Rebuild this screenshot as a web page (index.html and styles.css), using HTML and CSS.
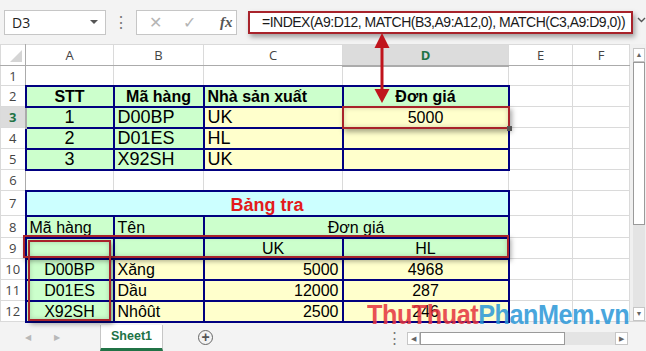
FILE: index.html
```html
<!DOCTYPE html>
<html lang="vi">
<head>
    <meta charset="UTF-8">
    <meta name="viewport" content="width=device-width, initial-scale=1.0">
    <title>Bảng tra - INDEX MATCH</title>
    <link rel="stylesheet" href="styles.css">
</head>
<body>
<div class="window">
    <div class="formula-bar">
        <div class="name-box"><span>D3</span><span class="caret"></span></div>
        <div class="vdots">⋮</div>
        <div class="fn-box">
            <span class="cancel">✕</span>
            <span class="enter">✓</span>
            <span class="fx">fx</span>
        </div>
        <div class="formula">=INDEX(A9:D12, MATCH(B3,A9:A12,0), MATCH(C3,A9:D9,0))</div>
        <svg class="expand" width="9" height="6" viewBox="0 0 9 6">
            <polyline points="1,1 4.5,4.5 8,1" fill="none" stroke="#555" stroke-width="1.4"/>
        </svg>
    </div>

    <div class="sheet">
        <table class="grid">
            <colgroup>
                <col style="width:25px"><col style="width:88px"><col style="width:90px"><col style="width:139px">
                <col style="width:166px"><col style="width:64px"><col style="width:57px">
            </colgroup>
            <tr class="hdr">
                <th class="corner"><span class="tri"></span></th>
                <th>A</th><th>B</th><th>C</th><th class="sel-col">D</th><th>E</th><th>F</th>
            </tr>
            <tr class="h20">
                <th>1</th><td></td><td></td><td></td><td></td><td></td><td></td>
            </tr>
            <tr class="h21">
                <th>2</th>
                <td class="n g c head">STT</td>
                <td class="n g c head">Mã hàng</td>
                <td class="n g l head">Nhà sản xuất</td>
                <td class="n g c head">Đơn giá</td>
                <td></td><td></td>
            </tr>
            <tr class="h21">
                <th class="sel-row">3</th>
                <td class="n g c big">1</td>
                <td class="n g l big">D00BP</td>
                <td class="n y l big">UK</td>
                <td class="n y c">5000</td>
                <td></td><td></td>
            </tr>
            <tr class="h21">
                <th>4</th>
                <td class="n g c big">2</td>
                <td class="n g l big">D01ES</td>
                <td class="n y l big">HL</td>
                <td class="n y"></td>
                <td></td><td></td>
            </tr>
            <tr class="h21">
                <th>5</th>
                <td class="n g c big">3</td>
                <td class="n g l big">X92SH</td>
                <td class="n y l big">UK</td>
                <td class="n y"></td>
                <td></td><td></td>
            </tr>
            <tr class="h21">
                <th>6</th><td></td><td></td><td></td><td></td><td></td><td></td>
            </tr>
            <tr class="h25">
                <th>7</th>
                <td class="n cy c title" colspan="4">Bảng tra</td>
                <td></td><td></td>
            </tr>
            <tr class="h22">
                <th>8</th>
                <td class="n g l">Mã hàng</td>
                <td class="n g l">Tên</td>
                <td class="n g c" colspan="2">Đơn giá</td>
                <td></td><td></td>
            </tr>
            <tr class="h21">
                <th>9</th>
                <td class="n g"></td>
                <td class="n g"></td>
                <td class="n g c">UK</td>
                <td class="n g c">HL</td>
                <td></td><td></td>
            </tr>
            <tr class="h21">
                <th>10</th>
                <td class="n g c">D00BP</td>
                <td class="n y l">Xăng</td>
                <td class="n y r">5000</td>
                <td class="n y c">4968</td>
                <td></td><td></td>
            </tr>
            <tr class="h21">
                <th>11</th>
                <td class="n g c">D01ES</td>
                <td class="n y l">Dầu</td>
                <td class="n y r">12000</td>
                <td class="n y c">287</td>
                <td></td><td></td>
            </tr>
            <tr class="h21">
                <th>12</th>
                <td class="n g c">X92SH</td>
                <td class="n y l">Nhôût</td>
                <td class="n y r">2500</td>
                <td class="n y c">246</td>
                <td></td><td></td>
            </tr>
        </table>
        <div class="vscroll">
            <div class="sb-btn">▲</div>
            <div class="sb-thumb"></div>
            <div class="sb-track"></div>
            <div class="sb-btn">▼</div>
        </div>
    </div>

    <div class="tabs">
        <span class="nav first">◀</span>
        <span class="nav">▶</span>
        <div class="tab">Sheet1</div>
        <span class="add">+</span>
        <span class="tab-dots">⋮</span>
        <div class="hscroll">
            <div class="hs-btn">◀</div>
            <div class="hs-thumb"></div>
            <div class="hs-track"></div>
            <div class="hs-btn">▶</div>
        </div>
    </div>

    <!-- callouts drawn over the sheet -->
    <div class="mark mark-d3"><span class="handle"></span></div>
    <div class="mark mark-row9"></div>
    <div class="mark mark-col-a"></div>
    <svg class="arrow" width="16" height="72" viewBox="0 0 16 72">
        <line x1="8" y1="14" x2="8" y2="59" stroke="#c0141c" stroke-width="3"/>
        <polygon points="0.5,16 8,1 15.5,16" fill="#c0141c"/>
        <polygon points="0.5,57 8,71 15.5,57" fill="#c0141c"/>
    </svg>
    <div class="watermark"><span class="wm-red">ThuThuat</span><span class="wm-blue">PhanMem.vn</span></div>
</div>
</body>
</html>
```

FILE: styles.css
```css
body {
    margin: 0;
    font-family: "Liberation Sans", Arial, sans-serif;
    background: #fff;
}
.window {
    position: relative;
    width: 646px;
    height: 351px;
    overflow: hidden;
    background: #fff;
}

/* formula bar */
.formula-bar {
    height: 44px;
    display: flex;
    align-items: center;
    padding-left: 4px;
    background: #f3f3f3;
    box-sizing: border-box;
}
.name-box {
    width: 102px;
    height: 25px;
    display: flex;
    align-items: center;
    justify-content: space-between;
    padding: 0 7px 0 7px;
    box-sizing: border-box;
    background: #fff;
    border: 1px solid #c6c6c6;
    font-family: "Open Sans", sans-serif;
    font-size: 14px;
    color: #222;
}
.caret {
    width: 0;
    height: 0;
    border-left: 4px solid transparent;
    border-right: 4px solid transparent;
    border-top: 4px solid #555;
}
.vdots {
    width: 30px;
    text-align: center;
    color: #777;
    font-size: 16px;
}
.fn-box {
    width: 101px;
    height: 25px;
    display: flex;
    align-items: center;
    box-sizing: border-box;
    background: #fff;
    border: 1px solid #c6c6c6;
    color: #b5b5b5;
}
.cancel {
    margin-left: 12px;
    font-size: 16px;
}
.enter {
    margin-left: 21px;
    font-size: 16px;
}
.fx {
    margin-left: 24px;
    font-family: "Liberation Serif", serif;
    font-style: italic;
    font-weight: bold;
    font-size: 15px;
    color: #555;
}
.formula {
    margin-left: 11px;
    width: 385px;
    height: 23px;
    box-sizing: border-box;
    padding-left: 12px;
    background: #fff;
    border: 2px solid #a8232b;
    box-shadow: 2px 3px 5px rgba(0, 0, 0, 0.35);
    font-size: 14px;
    letter-spacing: -0.5px;
    line-height: 19px;
    color: #1a1a1a;
    white-space: nowrap;
    overflow: hidden;
}
.expand {
    margin-left: 4px;
    margin-top: -4px;
}

/* sheet */
.sheet {
    display: flex;
    height: 277px;
}
.grid {
    width: 629px;
    table-layout: fixed;
    border-collapse: collapse;
}
.grid th {
    font-family: "Open Sans", sans-serif;
    font-weight: normal;
    font-size: 13px;
    color: #444;
    background: #fff;
    border: 1px solid #dadada;
    padding: 0;
}
.grid tr.hdr {
    height: 21px;
}
.grid tr.hdr th {
    border-bottom-color: #ababab;
}
.grid tr th:first-child {
    border-right-color: #ababab;
}
.corner {
    position: relative;
}
.tri {
    position: absolute;
    right: 3px;
    bottom: 3px;
    width: 0;
    height: 0;
    border-left: 12px solid transparent;
    border-bottom: 12px solid #d5d5d5;
}
.grid th.sel-col {
    background: #dcdcdc;
    color: #217346;
    font-weight: bold;
    border-bottom: 2px solid #217346;
}
.grid th.sel-row {
    background: #dcdcdc;
    color: #217346;
    font-weight: bold;
    border-right: 2px solid #217346;
}
.grid td {
    border: 1px solid #dadada;
    padding: 0 3px 1px;
    font-size: 16px;
    line-height: 1;
    vertical-align: bottom;
    white-space: nowrap;
    overflow: hidden;
    color: #000;
}
.h20 { height: 20px; }
.h21 { height: 21px; }
.h22 { height: 22px; }
.h25 { height: 25px; }

.grid td.n { border: 2px solid #000080; }
.g { background: #ccffcc; }
.y { background: #ffffcc; }
.cy { background: #ccffff; }
.l { text-align: left; }
.c { text-align: center; }
.r { text-align: right; }
.grid td.big { font-size: 18px; }
.grid td.head {
    font-weight: bold;
    font-size: 16px;
}
.grid td.title {
    font-weight: bold;
    font-size: 18px;
    color: #e31b1b;
}

/* scrollbars */
.vscroll {
    width: 17px;
    padding-top: 4px;
    display: flex;
    flex-direction: column;
    background: #f0f0f0;
    box-sizing: border-box;
}
.sb-btn {
    height: 12px;
    margin: 0 1px 0 3px;
    font-size: 7px;
    line-height: 12px;
    text-align: center;
    color: #666;
    background: #fff;
    border: 1px solid #c6c6c6;
}
.sb-thumb {
    height: 161px;
    margin: 0 1px 0 3px;
    background: #fff;
    border: 1px solid #9a9a9a;
}
.sb-track {
    flex: 1;
    margin: 0 1px 0 3px;
    background: #e4e4e4;
}

/* sheet tabs */
.tabs {
    height: 30px;
    display: flex;
    align-items: flex-start;
    background: #f3f3f3;
    border-top: 1px solid #d4d4d4;
    box-sizing: border-box;
}
.nav {
    width: 10px;
    margin-top: 11px;
    text-align: center;
    font-size: 8px;
    color: #b8b8b8;
}
.nav.first {
    margin-left: 23px;
}
.nav + .nav {
    margin-left: 19px;
}
.tab {
    margin-left: 38px;
    margin-top: 3px;
    width: 63px;
    height: 26px;
    box-sizing: border-box;
    background: #fff;
    border-left: 1px solid #c6c6c6;
    border-right: 1px solid #c6c6c6;
    border-bottom: 3px solid #217346;
    text-align: center;
    font-weight: bold;
    font-size: 12.5px;
    line-height: 23px;
    color: #217346;
}
.add {
    margin-left: 35px;
    margin-top: 8px;
    width: 13px;
    height: 13px;
    border: 1px solid #666;
    border-radius: 50%;
    text-align: center;
    font-size: 14px;
    font-weight: bold;
    line-height: 13px;
    color: #555;
}
.tab-dots {
    width: 8px;
    margin-left: 174px;
    margin-top: 7px;
    text-align: center;
    font-size: 15px;
    color: #777;
}
.hscroll {
    margin-left: 12px;
    margin-top: 10px;
    width: 221px;
    height: 13px;
    display: flex;
}
.hs-btn {
    width: 13px;
    height: 13px;
    box-sizing: border-box;
    background: #fff;
    border: 1px solid #c6c6c6;
    font-size: 7px;
    line-height: 11px;
    text-align: center;
    color: #666;
}
.hs-thumb {
    width: 145px;
    box-sizing: border-box;
    background: #fff;
    border: 1px solid #9a9a9a;
}
.hs-track {
    flex: 1;
    background: #e4e4e4;
}

/* callout boxes */
.mark {
    position: absolute;
    box-sizing: border-box;
    border: 2px solid #a8232b;
    box-shadow: 2px 3px 5px rgba(0, 0, 0, 0.35), inset 0 0 5px rgba(0, 0, 0, 0.18);
}
.mark-d3 {
    left: 342px;
    top: 106px;
    width: 168px;
    height: 23px;
}
.handle {
    position: absolute;
    right: -4px;
    bottom: -4px;
    width: 5px;
    height: 5px;
    background: #555;
}
.mark-row9 {
    left: 23px;
    top: 235px;
    width: 486px;
    height: 23px;
}
.mark-col-a {
    left: 28px;
    top: 240px;
    width: 83px;
    height: 81px;
}
.arrow {
    position: absolute;
    left: 374px;
    top: 32px;
}
.watermark {
    position: absolute;
    left: 367px;
    top: 299px;
    font-size: 28px;
    font-weight: bold;
    letter-spacing: -0.5px;
    transform-origin: left top;
    transform: scaleX(0.9);
    opacity: 0.85;
    white-space: nowrap;
}
.wm-red { color: #e5333e; }
.wm-blue { color: #2a97d8; }
```
